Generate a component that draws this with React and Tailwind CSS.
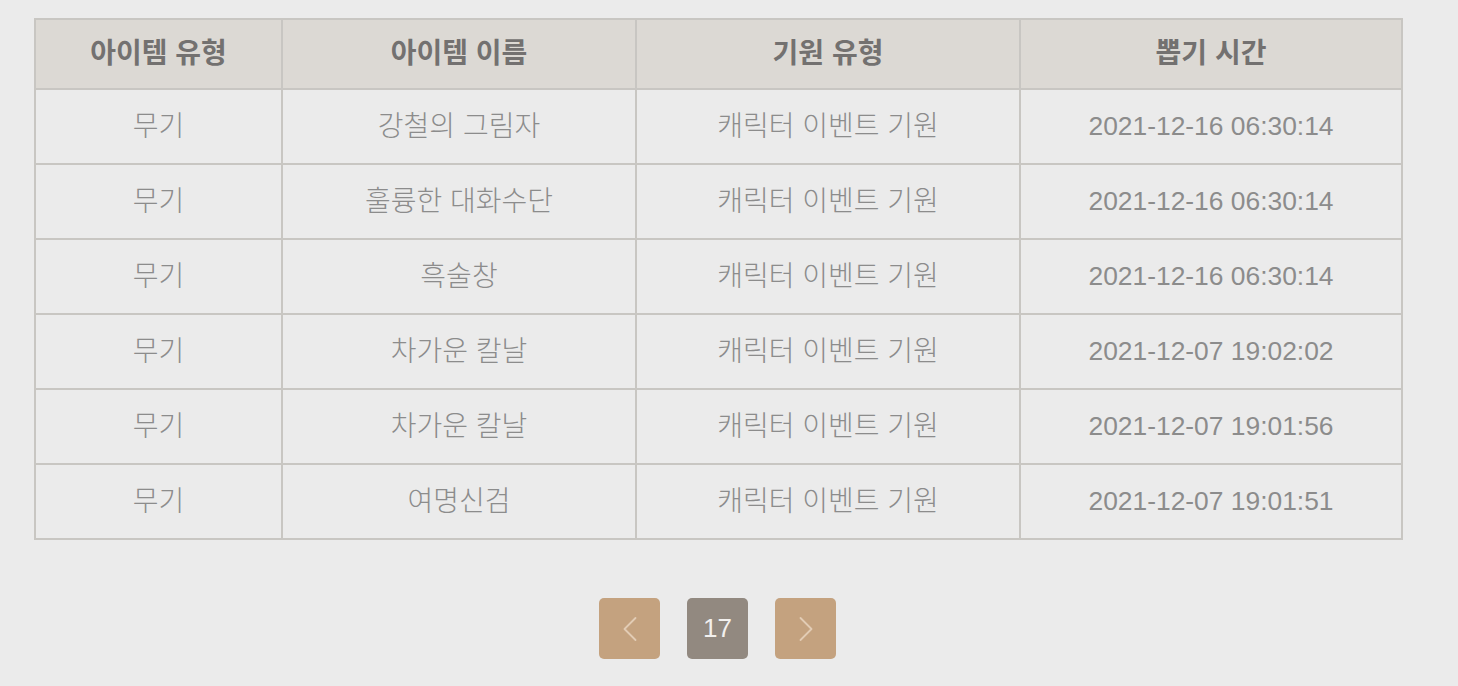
import { ChevronLeft, ChevronRight } from 'lucide-react';

const rows = [
  { type: '무기', name: '강철의 그림자', banner: '캐릭터 이벤트 기원', time: '2021-12-16 06:30:14' },
  { type: '무기', name: '훌륭한 대화수단', banner: '캐릭터 이벤트 기원', time: '2021-12-16 06:30:14' },
  { type: '무기', name: '흑술창', banner: '캐릭터 이벤트 기원', time: '2021-12-16 06:30:14' },
  { type: '무기', name: '차가운 칼날', banner: '캐릭터 이벤트 기원', time: '2021-12-07 19:02:02' },
  { type: '무기', name: '차가운 칼날', banner: '캐릭터 이벤트 기원', time: '2021-12-07 19:01:56' },
  { type: '무기', name: '여명신검', banner: '캐릭터 이벤트 기원', time: '2021-12-07 19:01:51' },
];

const headers = ['아이템 유형', '아이템 이름', '기원 유형', '뽑기 시간'];

export default function App() {
  return (
    <div
      className="min-h-screen w-full bg-[#ebebeb] pt-[18px] pl-[34px]"
      style={{ fontFamily: '"Liberation Sans", "Noto Sans CJK KR", sans-serif' }}
    >
      <div className="w-[1367px]">
        <table className="w-full border-collapse border-2 border-[#c8c6c2] table-fixed">
          <colgroup>
            <col className="w-[247px]" />
            <col className="w-[354px]" />
            <col className="w-[384px]" />
            <col className="w-[382px]" />
          </colgroup>
          <thead>
            <tr className="h-[70px] bg-[#dcd9d4]">
              {headers.map((h) => (
                <th key={h} className="border-2 border-[#c8c6c2] text-[28px] font-bold text-[#737170] text-center">
                  {h}
                </th>
              ))}
            </tr>
          </thead>
          <tbody>
            {rows.map((r, i) => (
              <tr key={i} className="h-[75px] bg-[#ebebeb]">
                <td className="border-2 border-[#c8c6c2] text-[28px] font-light text-[#8c8c8c] text-center">{r.type}</td>
                <td className="border-2 border-[#c8c6c2] text-[28px] font-light text-[#8c8c8c] text-center">{r.name}</td>
                <td className="border-2 border-[#c8c6c2] text-[28px] font-light text-[#8c8c8c] text-center">{r.banner}</td>
                <td className="border-2 border-[#c8c6c2] text-[26.4px] text-[#8c8c8c] text-center">{r.time}</td>
              </tr>
            ))}
          </tbody>
        </table>

        <div className="flex justify-center gap-[27px] mt-[58px]">
          <button className="w-[61px] h-[61px] rounded-[5px] bg-[#c4a27f] flex items-center justify-center">
            <ChevronLeft className="w-11 h-11 text-[#e2ccb5]" strokeWidth={1} />
          </button>
          <button className="w-[61px] h-[61px] rounded-[5px] bg-[#928980] flex items-center justify-center text-[26px] text-[#f2f0ee]">
            17
          </button>
          <button className="w-[61px] h-[61px] rounded-[5px] bg-[#c4a27f] flex items-center justify-center">
            <ChevronRight className="w-11 h-11 text-[#e2ccb5]" strokeWidth={1} />
          </button>
        </div>
      </div>
    </div>
  );
}
